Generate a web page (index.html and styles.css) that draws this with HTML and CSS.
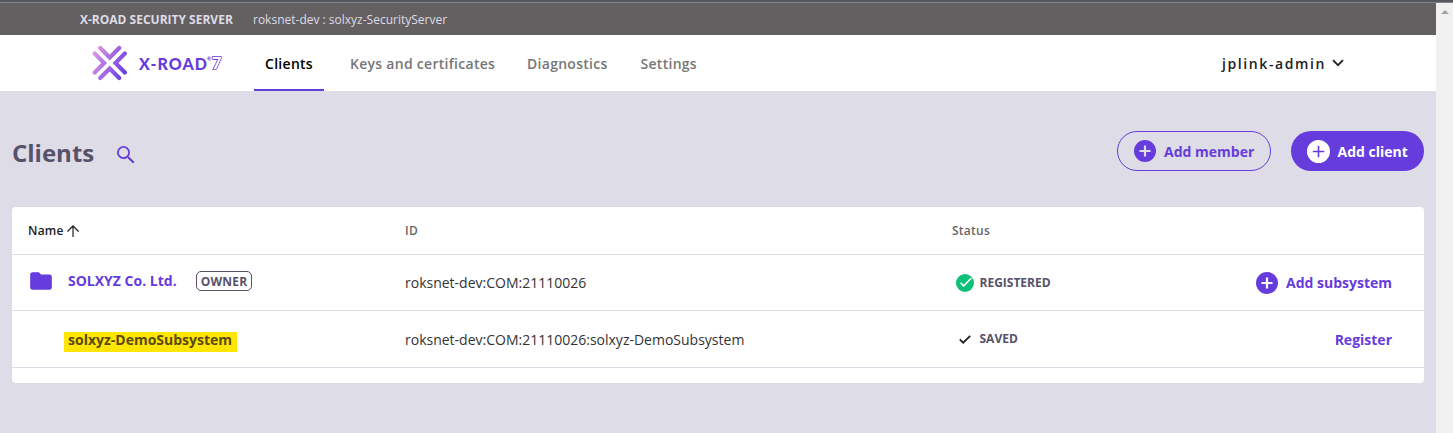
FILE: index.html
```html
<!DOCTYPE html>
<html lang="en">
<head>
<meta charset="utf-8">
<title>X-Road Security Server</title>
<link rel="stylesheet" href="styles.css">
</head>
<body>
<svg class="defs" width="0" height="0" aria-hidden="true">
  <symbol id="plus-circle" viewBox="2 2 20 20"><path d="M12 2a10 10 0 1 0 0 20 10 10 0 0 0 0-20zm5 11h-4v4h-2v-4H7v-2h4V7h2v4h4z"/></symbol>
  <symbol id="plus-circle-thin" viewBox="2 2 20 20"><path d="M12 2a10 10 0 1 0 0 20 10 10 0 0 0 0-20zm5 10.7h-4.3v4.3h-1.4v-4.3H7v-1.4h4.3V7h1.4v4.3h4.3z"/></symbol>
</svg>
<div class="window">
  <div class="app">
    <div class="topbar"><strong class="server">X-ROAD SECURITY SERVER</strong><span class="instance">roksnet-dev : solxyz-SecurityServer</span></div>
    <header class="nav">
      <div class="logo">
        <svg class="mark" width="36" height="36" viewBox="0 0 36 36">
          <defs><linearGradient id="g" gradientUnits="userSpaceOnUse" x1="1" y1="10" x2="35" y2="26"><stop offset="0" stop-color="#dc96e6"/><stop offset="1" stop-color="#663cdc"/></linearGradient></defs>
          <path d="M8.2 3 17.7 12.5 27.2 3M8.2 33 17.7 23.5 27.2 33M2.7 8.5 12.1 18 2.7 27.5M32.8 8.5 23.4 18 32.8 27.5" fill="none" stroke="url(#g)" stroke-width="4.2" stroke-linecap="round"/>
        </svg>
        <span class="wordmark">X-ROAD</span><span class="dot">®</span><svg class="seven" width="14" height="24" viewBox="0 0 14 24"><text x="1" y="18">7</text></svg>
      </div>
      <nav class="tabs">
        <a class="tab active">Clients</a><a class="tab keys">Keys and certificates</a><a class="tab diag">Diagnostics</a><a class="tab sett">Settings</a>
      </nav>
      <div class="user"><span class="username">jplink-admin</span>
        <svg width="12" height="8" viewBox="0 0 12 8"><path d="M1 1.2 6 6.2 11 1.2" fill="none" stroke="#212121" stroke-width="1.9"/></svg>
      </div>
    </header>
    <main class="content">
      <div class="titlebar">
        <h1>Clients</h1>
        <svg class="search" width="24" height="24" viewBox="0 0 24 24"><path d="M15.5 14h-.79l-.28-.27A6.47 6.47 0 0 0 16 9.5 6.5 6.5 0 1 0 9.5 16c1.61 0 3.09-.59 4.23-1.57l.27.28v.79l5 4.99L20.49 19zm-6 .2a4.7 4.7 0 1 1 0-9.4 4.7 4.7 0 0 1 0 9.4z"/></svg>
        <button class="btn outlined"><svg width="22" height="22"><use href="#plus-circle"/></svg><span>Add member</span></button>
        <button class="btn filled"><svg width="23" height="23"><use href="#plus-circle-thin"/></svg><span>Add client</span></button>
      </div>
      <section class="card">
        <div class="row head">
          <div class="c-name sorted"><span>Name</span><svg width="12" height="12" viewBox="4 4 16 16"><path d="M4 12l1.2 1.2L11.2 7.2V20h1.6V7.2l6 6L20 12l-8-8z"/></svg></div>
          <div class="c-id">ID</div>
          <div class="c-status">Status</div>
        </div>
        <div class="row owner">
          <div class="c-name"><svg class="folder" width="26" height="26" viewBox="0 0 24 24"><path d="M10 4H4c-1.1 0-2 .9-2 2v12c0 1.1.9 2 2 2h16c1.1 0 2-.9 2-2V8c0-1.1-.9-2-2-2h-8z"/></svg><span class="member">SOLXYZ Co. Ltd.</span><span class="badge">OWNER</span></div>
          <div class="c-id">roksnet-dev:COM:21110026</div>
          <div class="c-status"><svg class="ok" width="18" height="18" viewBox="0 0 18 18"><circle cx="9" cy="9" r="9" fill="#0cc177"/><path d="M4.6 8.8 7.7 11.8 15.2 4.3" fill="none" stroke="#fff" stroke-width="1.6"/></svg><span>REGISTERED</span></div>
          <a class="action"><svg width="22" height="22"><use href="#plus-circle"/></svg><span>Add subsystem</span></a>
        </div>
        <div class="row sub">
          <div class="c-name"><mark>solxyz-DemoSubsystem</mark></div>
          <div class="c-id">roksnet-dev:COM:21110026:solxyz-DemoSubsystem</div>
          <div class="c-status"><svg class="saved" width="12" height="9" viewBox="0 0 12 9"><path d="M.8 4.4 4.2 7.7 11.2.8" fill="none" stroke="#212121" stroke-width="1.8"/></svg><span>SAVED</span></div>
          <a class="action"><span class="register">Register</span></a>
        </div>
      </section>
    </main>
  </div>
  <div class="scrollbar"><i></i></div>
</div>
</body>
</html>
```
FILE: styles.css
```css
* { box-sizing: border-box; }
body { margin: 0; font-family: "Open Sans", sans-serif; font-size: 14px; color: #212121; overflow: hidden; }
.defs { display: block; position: absolute; }
svg { display: block; flex: none; fill: currentColor; }
.window { display: flex; height: 433px; border-top: 2px solid #54575c; background: #dedce6; }
.app { flex: 1; border-top: 1px solid #858287; }
.scrollbar { width: 17px; background: #f0f0f0; border-top: 1px solid #858287; display: flex; justify-content: center; padding-top: 7px; }
.scrollbar i { width: 0; height: 0; border: 4px solid transparent; border-top: 0; border-bottom-color: #a3a3a3; }

.topbar { height: 32px; background: #636062; color: #dedce6; display: flex; align-items: center; padding-left: 80px; font-size: 12px; white-space: nowrap; }
.server { font-weight: 700; width: 173px; }

.nav { height: 56px; background: #fff; display: flex; }
.logo { width: 254px; padding-left: 92px; display: flex; align-items: center; color: #663cdc; }
.mark { margin-right: 11px; }
.wordmark { font: 900 16px/20px Lato, sans-serif; letter-spacing: 1.05px; margin-top: 1px; }
.dot { font: 700 5px/6px Lato, sans-serif; align-self: flex-start; margin-top: 21px; margin-left: -1px; }
.seven { overflow: visible; }
.seven text { font: 900 16px Lato, sans-serif; fill: #fff; stroke: #663cdc; stroke-width: 1.6px; paint-order: stroke; }
.tabs { display: flex; flex: 1; }
.tab { font-weight: 600; letter-spacing: .28px; line-height: 58px; height: 56px; color: #767676; white-space: nowrap; }
.tab.active { width: 70px; text-align: center; color: #000; border-bottom: 2px solid #663cdc; }
.keys { width: 177px; margin-left: 26px; }
.diag { width: 113px; }
.sett { margin-left: .5px; }
.user { display: flex; align-items: center; gap: 6px; margin-right: 92px; font-weight: 600; }
.username { letter-spacing: 1.6px; }

.content { padding: 40px 12px 0; }
.titlebar { height: 40px; display: flex; align-items: center; color: #663cdc; }
h1 { margin: 4px 0 0; font-size: 24px; line-height: 36px; font-weight: 700; color: #575169; width: 102px; }
.search { margin-top: 7px; }
.btn { height: 40px; border-radius: 20px; font: 700 14px "Open Sans", sans-serif; display: flex; align-items: center; gap: 8px; padding: 0 16px; white-space: nowrap; }
.outlined { width: 154px; margin-left: auto; margin-right: 20px; background: none; border: 1px solid #663cdc; color: #663cdc; }
.filled { width: 133px; background: #663cdc; border: 0; color: #fff; }
.filled span { margin-left: -.5px; }
.card { margin-top: 36px; height: 176px; background: #fff; border-radius: 4px; }
.row { display: grid; grid-template-columns: 377px 547px 1fr auto; align-items: center; padding: 0 32px 0 16px; border-bottom: 1px solid #dedce6; white-space: nowrap; }
.head { height: 48px; font-size: 12px; font-weight: 600; letter-spacing: .25px; color: #666; }
.owner { height: 56px; }
.sub { height: 57px; }
.sorted { color: #212121; gap: 3px; }
.c-name, .c-status, .action { display: flex; align-items: center; }
.folder { color: #663cdc; margin-right: 14px; margin-top: -4px; }
.member { font-weight: 700; color: #663cdc; width: 128px; margin-top: -4px; }
.badge { font-size: 12px; font-weight: 700; letter-spacing: .2px; line-height: 19px; height: 20px; width: 56px; text-align: center; border: 1px solid #575169; border-radius: 5px; color: #575169; margin-top: -4px; }
.c-status { font-size: 12px; color: #575169; }
.owner .c-status, .sub .c-status { font-weight: 700; letter-spacing: 0; }
.sub .c-status span { margin-top: -1px; }
.head .c-status { color: #666; }
.sub .c-id, .owner .c-id { color: #333; }
.ok { margin: 0 5.5px 0 4px; }
.saved { margin: 0 8.5px 0 7px; }
.action { color: #663cdc; font-weight: 700; gap: 8px; }
mark { margin-left: 36px; width: 173px; height: 20px; margin-top: 5px; padding-left: 4px; line-height: 16px; background: #ffe600; color: #5a4a11; font-weight: 700; }
```
